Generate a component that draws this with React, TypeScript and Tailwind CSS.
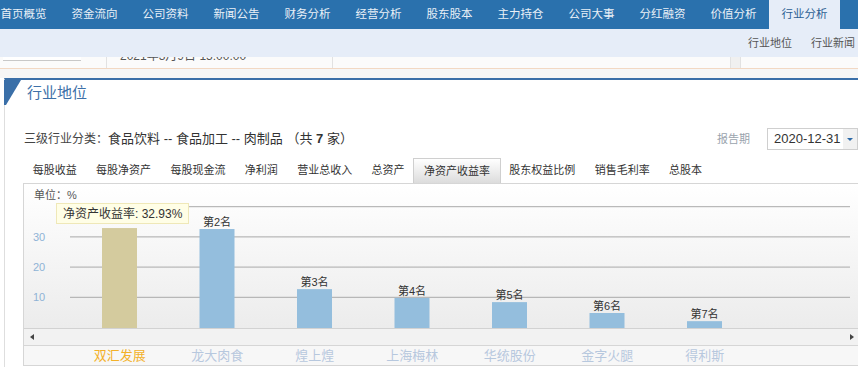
import React from "react";

const navItems = [
    "首页概览",
    "资金流向",
    "公司资料",
    "新闻公告",
    "财务分析",
    "经营分析",
    "股东股本",
    "主力持仓",
    "公司大事",
    "分红融资",
    "价值分析",
    "行业分析",
];

const tabs = [
    "每股收益",
    "每股净资产",
    "每股现金流",
    "净利润",
    "营业总收入",
    "总资产",
    "净资产收益率",
    "股东权益比例",
    "销售毛利率",
    "总股本",
];

const companies = [
    { name: "双汇发展", value: 32.93 },
    { name: "龙大肉食", value: 32.6 },
    { name: "煌上煌", value: 12.7 },
    { name: "上海梅林", value: 9.8 },
    { name: "华统股份", value: 8.4 },
    { name: "金字火腿", value: 4.8 },
    { name: "得利斯", value: 2.1 },
];

// plot scale: 0 at y=143.5, 10 units = 30.2px
const yOf = (v: number) => 143.5 - v * 3.02;

function Chart() {
    return (
        <svg width="834" height="144" className="block">
            <text x="10" y="15" fontSize="11" fill="#555">
                单位：%
            </text>
            {[40, 30, 20, 10].map((v) => (
                <g key={v}>
                    <line x1="46" x2="826" y1={yOf(v)} y2={yOf(v)} stroke="#a9a9a9" strokeWidth="1" />
                    {v < 40 && (
                        <text x="9" y={yOf(v) + 4} fontSize="11" fill="#8fb3d6">
                            {v}
                        </text>
                    )}
                </g>
            ))}
            {companies.map((c, i) => {
                const x = 78 + i * 97.5;
                const top = yOf(c.value);
                return (
                    <g key={c.name}>
                        <rect
                            x={x}
                            y={top}
                            width="35"
                            height={144 - top}
                            fill={i === 0 ? "#d4cb9e" : "#94bedd"}
                        />
                        {i > 0 && (
                            <text x={x + 17.5} y={top - 3} fontSize="11" fill="#333" textAnchor="middle">
                                第{i + 1}名
                            </text>
                        )}
                    </g>
                );
            })}
        </svg>
    );
}

export default function App() {
    return (
        <div className="w-[858px] h-[367px] overflow-hidden bg-white font-['Liberation_Sans','Noto_Sans_CJK_SC',sans-serif]">
            {/* top nav */}
            <div className="h-[29px] bg-[#2a71ad] flex -ml-[12px]">
                {navItems.map((item, i) => (
                    <div
                        key={item}
                        className={`w-[71px] shrink-0 flex items-center justify-center text-[11.5px] ${
                            i === navItems.length - 1
                                ? "bg-[#e6edf8] text-[#2d5f93]"
                                : "text-[#e9f0f7]"
                        }`}
                    >
                        {item}
                    </div>
                ))}
            </div>
            <div className="h-[28px] bg-[#e6edf8] flex items-center justify-end gap-[19px] pr-[3px] text-[11px] text-[#555]">
                <span>行业地位</span>
                <span>行业新闻</span>
            </div>

            {/* scrolled header row */}
            <div className="h-[12px] overflow-hidden flex bg-[#fbfbfb] border-b border-[#f2d8c3]">
                <div className="w-[81px] shrink-0 pl-[3px]">
                    <div className="h-[4px] border-b border-[#c8c8c8] bg-white" />
                </div>
                <div className="w-[25px] shrink-0" />
                <div className="w-[226px] shrink-0 border-l border-[#e2e2e2] pl-[13px]">
                    <div className="-mt-[9px] text-[12px] text-[#555] leading-[16px]">2021年3月9日 15:00:00</div>
                </div>
                <div className="w-[398px] shrink-0 border-l border-[#e2e2e2]" />
                <div className="w-[11px] shrink-0 border-l border-r border-[#e2e2e2] bg-[#f0f0f0]" />
                <div className="flex-1" />
            </div>
            <div className="h-[9px] bg-[#f6f6f6]" />

            {/* panel */}
            <div className="relative ml-[4px] border-l border-[#dedede] border-t-2 border-t-[#3a6fa8] h-[300px]">
                <svg className="absolute -left-[1px] top-0" width="18" height="26">
                    <polygon points="0,0 17,0 2,25 0,25" fill="#3a6fa8" />
                </svg>
                <div className="h-[26px] pl-[22px] flex items-center text-[15px] text-[#3d70a8]">行业地位</div>

                <div className="mt-[22px] h-[22px] flex items-center justify-between pl-[19px]">
                    <div className="text-[13px] text-[#333] whitespace-nowrap">
                        <span className="text-[12px] text-[#444]">三级行业分类：</span>食品饮料 -- 食品加工 -- 肉制品 （共{" "}
                        <b>7</b> 家）
                    </div>
                    <div className="flex items-center h-full">
                        <span className="text-[11px] text-[#9aa3ad]">报告期</span>
                        <div className="ml-[17px] w-[91px] h-[22px] border border-[#cfcfcf] flex items-center">
                            <span className="pl-[6px] text-[13px] text-[#333] flex-1">2020-12-31</span>
                            <div className="w-[14px] h-full bg-[#f1f1f1] flex items-center justify-center">
                                <span className="border-x-[3px] border-x-transparent border-t-[3px] border-t-[#2d6aa8]" />
                            </div>
                        </div>
                    </div>
                </div>

                {/* tabs */}
                <div className="mt-[8px] h-[25px] flex ml-[18px]">
                    {tabs.map((t, i) => (
                        <div
                            key={t}
                            className={`px-[9.7px] flex items-center text-[11px] text-[#333] ${
                                i === 6
                                    ? "bg-gradient-to-b from-white to-[#dcdcdc] border-l border-t border-r border-[#cfcfcf] -mx-[1px] relative"
                                    : ""
                            }`}
                        >
                            {t}
                        </div>
                    ))}
                </div>

                {/* chart */}
                <div className="ml-[18px] border-t border-l border-[#d6d6d6]">
                    <div className="relative h-[144px] bg-gradient-to-b from-white to-[#ececec]">
                        <Chart />
                        <div className="absolute left-[32px] top-[19px] h-[21px] bg-[#fffee6] border border-[#efe8b8] flex items-center px-[6px] text-[12px] text-[#333] whitespace-nowrap">
                            净资产收益率: 32.93%
                        </div>
                    </div>
                    <div className="h-[17px] border-t border-[#d2d2d2] bg-[#f2f2f2] flex items-center justify-between pl-[6px] pr-[4px]">
                        <span className="border-y-[3px] border-y-transparent border-r-[4px] border-r-[#444]" />
                        <span className="border-y-[3px] border-y-transparent border-l-[4px] border-l-[#444]" />
                    </div>
                    <div className="h-[21px] border-t border-b border-[#d6d6d6] bg-[#f7f7f7] grid grid-cols-[repeat(7,97.5px)] pl-[47px] items-center">
                        {companies.map((c, i) => (
                            <div
                                key={c.name}
                                className={`text-center text-[13px] ${i === 0 ? "text-[#f3b12a]" : "text-[#b7c8de]"}`}
                            >
                                {c.name}
                            </div>
                        ))}
                    </div>
                </div>
            </div>
        </div>
    );
}
